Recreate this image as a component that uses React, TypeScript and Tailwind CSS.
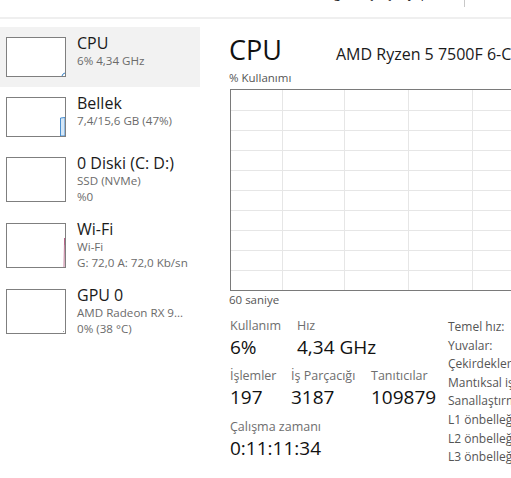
const font = { fontFamily: '"Open Sans", "Noto Sans", sans-serif' };

type Item = {
  title: string;
  lines: string[];
  selected?: boolean;
  tall?: boolean;
  graph: 'cpu' | 'mem' | 'disk' | 'wifi' | 'gpu';
};

const items: Item[] = [
  { title: 'CPU', lines: ['6% 4,34 GHz'], selected: true, graph: 'cpu' },
  { title: 'Bellek', lines: ['7,4/15,6 GB (47%)'], graph: 'mem' },
  { title: '0 Diski (C: D:)', lines: ['SSD (NVMe)', '%0'], tall: true, graph: 'disk' },
  { title: 'Wi-Fi', lines: ['Wi-Fi', 'G: 72,0 A: 72,0 Kb/sn'], tall: true, graph: 'wifi' },
  { title: 'GPU 0', lines: ['AMD Radeon RX 9...', '0% (38 °C)'], tall: true, graph: 'gpu' },
];

function Thumb({ kind, tall }: { kind: Item['graph']; tall?: boolean }) {
  const h = tall ? 43 : 38;
  return (
    <div className={`w-[60px] ${tall ? 'h-[45px]' : 'h-[40px]'} border border-[#7f7f7f] bg-white shrink-0`}>
      <svg width="58" height={h} viewBox={`0 0 58 ${h}`} className="block">
        {kind === 'cpu' && <path d={`M55 ${h} L56 ${h - 2} L58 ${h - 3}`} stroke="#3b82c4" fill="none" strokeWidth="1" />}
        {kind === 'mem' && (
          <path d={`M53.5 ${h} L53.5 ${h - 18} L58 ${h - 18.5} L58 ${h} Z`} fill="#d6e7f6" stroke="#4a8fd0" strokeWidth="1" />
        )}
        {kind === 'wifi' && <path d={`M57 ${h} L57.6 ${h - 29} L58 ${h - 22}`} stroke="#b0577c" fill="none" strokeWidth="0.8" />}
        {kind === 'gpu' && <rect x="56" y={h - 2} width="1" height="1" fill="#9a9a9a" />}
      </svg>
    </div>
  );
}

function SideItem({ item }: { item: Item }) {
  return (
    <div className={`flex gap-[11px] px-[6px] pt-[10px] ${item.tall ? 'h-[66px]' : 'h-[60px]'} ${item.selected ? 'bg-[#f2f2f2]' : ''}`}>
      <Thumb kind={item.graph} tall={item.tall} />
      <div className="-mt-[4px]">
        <div className="text-[16px] leading-[20px] text-[#1a1a1a] whitespace-nowrap">{item.title}</div>
        {item.lines.map((l) => (
          <div key={l} className="text-[11.6px] leading-[16px] text-[#6b6b6b] whitespace-nowrap">{l}</div>
        ))}
      </div>
    </div>
  );
}

function UsageGraph() {
  const w = 300;
  const hLines = [21, 41, 61, 81, 101, 121, 141, 161, 181];
  const vLines = [52, 114, 178, 242];
  return (
    <svg width={w} height="202" className="block">
      <rect x="0.5" y="0.5" width={w} height="201" fill="#ffffff" stroke="#7a7a7a" />
      {hLines.map((y) => (
        <line key={y} x1="1" x2={w} y1={y + 0.5} y2={y + 0.5} stroke="#e6e6e6" />
      ))}
      {vLines.map((x) => (
        <line key={x} x1={x + 0.5} x2={x + 0.5} y1="1" y2="201" stroke="#e6e6e6" />
      ))}
    </svg>
  );
}

const specs = ['Temel hız:', 'Yuvalar:', 'Çekirdekler:', 'Mantıksal işlemciler:', 'Sanallaştırma:', 'L1 önbelleği:', 'L2 önbelleği:', 'L3 önbelleği:'];

function Stat({ label, value, w }: { label: string; value: string; w: string }) {
  return (
    <div className={`${w} shrink-0`}>
      <div className="text-[12.5px] leading-[17px] text-[#6e6e6e] whitespace-nowrap">{label}</div>
      <div className="text-[19px] leading-[26px] text-[#111] whitespace-nowrap">{value}</div>
    </div>
  );
}

export default function App() {
  return (
    <div className="w-[511px] h-[478px] overflow-hidden bg-white" style={font}>
      <div className="h-[17px] relative overflow-hidden">
        <div className="flex items-start h-full">
          <div className="ml-[334px] -mt-[14px] text-[12px] leading-[16px] text-[#1a1a1a] whitespace-nowrap">
            görev çalıştır yapılandır
          </div>
        </div>
        <div className="absolute left-[464px] top-0 w-px h-[7px] bg-[#c8c8c8]" />
      </div>
      <div className="h-[2px] bg-[#efefef]" />
      <div className="flex">
        <div className="w-[200px] shrink-0 pt-[8px]">
          {items.map((it) => (
            <SideItem key={it.title} item={it} />
          ))}
        </div>
        <div className="flex-1 min-w-0 pl-[29px] pt-[13px] overflow-hidden">
          <div className="flex items-baseline whitespace-nowrap">
            <div className="w-[107px] shrink-0 text-[27px] leading-[36px] text-[#111]">CPU</div>
            <div className="text-[16px] text-[#1a1a1a]">AMD Ryzen 5 7500F 6-Core Processor</div>
          </div>
          <div className="text-[11.5px] leading-[16px] mt-[2px] text-[#555]">% Kullanımı</div>
          <div className="mt-[3px] pl-[1px]">
            <UsageGraph />
          </div>
          <div className="text-[11.5px] leading-[16px] mt-[1px] text-[#555]">60 saniye</div>
          <div className="flex mt-[9px]">
            <div className="w-[219px] shrink-0 pl-[1px]">
              <div className="flex">
                <Stat label="Kullanım" value="6%" w="w-[67px]" />
                <Stat label="Hız" value="4,34 GHz" w="w-[80px]" />
              </div>
              <div className="flex mt-[7px]">
                <Stat label="İşlemler" value="197" w="w-[61px]" />
                <Stat label="İş Parçacığı" value="3187" w="w-[80px]" />
                <Stat label="Tanıtıcılar" value="109879" w="w-[70px]" />
              </div>
              <div className="mt-[8px]">
                <Stat label="Çalışma zamanı" value="0:11:11:34" w="w-[120px]" />
              </div>
            </div>
            <div className="pt-[1px]">
              {specs.map((s) => (
                <div key={s} className="text-[12px] leading-[18.6px] text-[#555] whitespace-nowrap">{s}</div>
              ))}
            </div>
          </div>
        </div>
      </div>
    </div>
  );
}
